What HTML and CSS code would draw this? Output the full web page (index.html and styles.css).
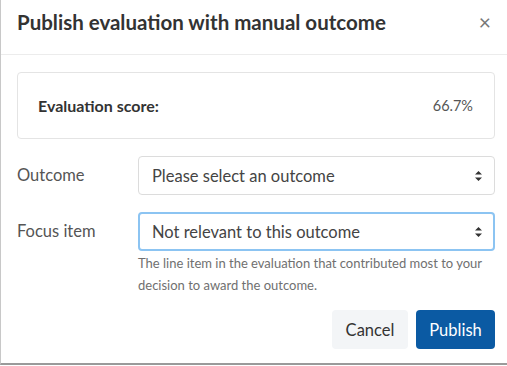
FILE: index.html
```html
<!DOCTYPE html>
<html lang="en">
<head>
    <meta charset="UTF-8">
    <meta name="viewport" content="width=device-width, initial-scale=1.0">
    <title>Publish evaluation</title>
    <link rel="stylesheet" href="styles.css">
</head>
<body>
    <div class="dialog">
        <div class="dialog-header">
            <h1>Publish evaluation with manual outcome</h1>
            <span class="close">&times;</span>
        </div>
        <div class="dialog-body">
            <div class="score-card">
                <span class="score-label">Evaluation score:</span>
                <span class="score-value">66.7%</span>
            </div>

            <div class="field">
                <label>Outcome</label>
                <div class="select">
                    <span>Please select an outcome</span>
                    <svg class="caret" width="7" height="10" viewBox="0 0 7 10"><path d="M3.5 0L7 3.6H0z M3.5 10L0 6.4H7z" fill="#333"/></svg>
                </div>
            </div>

            <div class="field">
                <label>Focus item</label>
                <div class="control">
                    <div class="select focused">
                        <span>Not relevant to this outcome</span>
                        <svg class="caret" width="7" height="10" viewBox="0 0 7 10"><path d="M3.5 0L7 3.6H0z M3.5 10L0 6.4H7z" fill="#333"/></svg>
                    </div>
                    <p class="help">The line item in the evaluation that contributed most to your decision to award the outcome.</p>
                </div>
            </div>

            <div class="actions">
                <button class="btn btn-cancel">Cancel</button>
                <button class="btn btn-primary">Publish</button>
            </div>
        </div>
    </div>
</body>
</html>
```

FILE: styles.css
```css
body {
    margin: 0;
    font-family: Lato, 'Liberation Sans', sans-serif;
    background: white;
    color: #333;
}
.dialog {
    width: 507px;
    height: 365px;
    box-sizing: border-box;
    border-left: 1px solid #c8c8c8;
    border-bottom: 2px solid #9a9a9a;
    background: white;
}
.dialog-header {
    display: flex;
    align-items: center;
    justify-content: space-between;
    height: 55px;
    box-sizing: border-box;
    padding: 0 16px 11px 16px;
    border-bottom: 1px solid #ececec;
}
.dialog-header h1 {
    margin: 0;
    font-size: 20.5px;
    font-weight: 700;
    color: #333;
    line-height: 28px;
}
.close {
    font-size: 21px;
    color: #777;
    line-height: 1;
}
.dialog-body {
    padding: 17px 12px 0 16px;
}
.score-card {
    display: flex;
    justify-content: space-between;
    align-items: center;
    height: 65px;
    padding: 0 21px 0 20px;
    border: 1px solid #e4e4e4;
    border-radius: 4px;
}
.score-label {
    font-size: 16px;
    font-weight: 700;
    color: #333;
}
.score-value {
    font-size: 14.5px;
    color: #555;
}
.field {
    display: flex;
    align-items: flex-start;
    margin-top: 17px;
}
.field label {
    width: 121px;
    flex-shrink: 0;
    font-size: 16.5px;
    color: #555;
    line-height: 39px;
}
.control {
    flex: 1;
}
.select {
    flex: 1;
    display: flex;
    align-items: center;
    justify-content: space-between;
    height: 39px;
    box-sizing: border-box;
    padding: 0 12px 0 13px;
    border: 1px solid #dcdcdc;
    border-radius: 4px;
    font-size: 16.5px;
    color: #444;
}
.select.focused {
    border: 2px solid #8cc4f2;
    padding: 0 11px 0 12px;
}
.help {
    margin: 1px 0 0 0;
    font-size: 13px;
    line-height: 22px;
    color: #707070;
}
.actions {
    display: flex;
    justify-content: flex-end;
    gap: 8px;
    margin-top: 14px;
}
.btn {
    font-family: inherit;
    font-size: 16.5px;
    height: 39px;
    border: none;
    border-radius: 4px;
    padding: 0;
}
.btn-cancel {
    background: #f3f5f7;
    color: #333;
    width: 76px;
}
.btn-primary {
    background: #0b5aa3;
    color: white;
    width: 79px;
}
```
